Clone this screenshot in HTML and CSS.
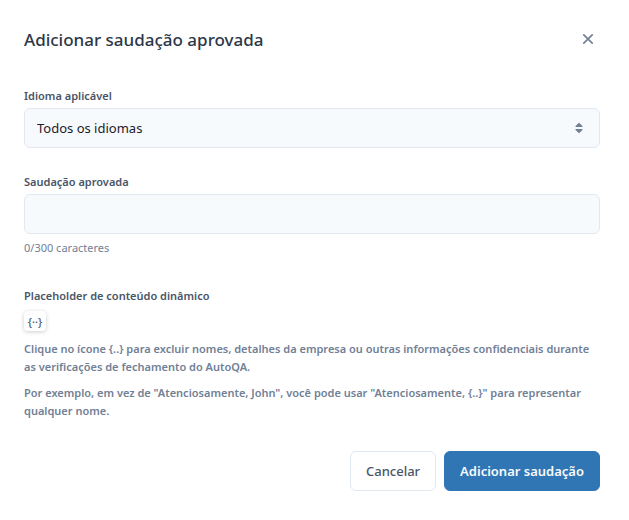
FILE: index.html
```html
<!DOCTYPE html>
<html lang="pt-BR">

<head>
  <meta charset="UTF-8" />
  <meta name="viewport" content="width=device-width, initial-scale=1.0" />
  <title>Adicionar saudação aprovada</title>
  <link rel="stylesheet" href="styles.css">
</head>

<body>
  <form class="modal">
    <header class="modal-header">
      <h1>Adicionar saudação aprovada</h1>
      <button type="button" class="close-btn" aria-label="Fechar">
        <svg width="12" height="12" viewBox="0 0 12 12" fill="none" stroke="currentColor" stroke-width="1.7" stroke-linecap="round">
          <path d="M1.8 1.8l8.4 8.4M10.2 1.8l-8.4 8.4" />
        </svg>
      </button>
    </header>

    <div class="field">
      <label for="language">Idioma aplicável</label>
      <div class="select-wrap">
        <select id="language" class="control">
          <option>Todos os idiomas</option>
        </select>
        <svg class="select-icon" width="8" height="12" viewBox="0 0 8 12" fill="currentColor">
          <path d="M4 .8L7.5 4Q7.9 5 7 5H1Q.1 5 .5 4ZM4 11.2L.5 8Q.1 7 1 7H7Q7.9 7 7.5 8Z" />
        </svg>
      </div>
    </div>

    <div class="field">
      <label for="greeting">Saudação aprovada</label>
      <input type="text" id="greeting" class="control" maxlength="300" />
      <div class="counter">0/300 caracteres</div>
    </div>

    <section class="placeholder">
      <h2>Placeholder de conteúdo dinâmico</h2>
      <button type="button" class="token-btn">{··}</button>
      <p>Clique no ícone {..} para excluir nomes, detalhes da empresa ou outras informações confidenciais durante as verificações de fechamento do AutoQA.</p>
      <p>Por exemplo, em vez de "Atenciosamente, John", você pode usar "Atenciosamente, {..}" para representar qualquer nome.</p>
    </section>

    <footer class="modal-footer">
      <button type="button" class="btn">Cancelar</button>
      <button type="submit" class="btn btn-primary">Adicionar saudação</button>
    </footer>
  </form>
</body>

</html>
```

FILE: styles.css
```css
* {
  box-sizing: border-box;
}

body {
  margin: 0;
  font-family: "Noto Sans", "Open Sans", sans-serif;
  font-size: 11px;
  line-height: 18px;
  color: #4a5568;
  background-color: #ffffff;
}

button,
input,
select {
  font-family: inherit;
}

.modal {
  padding: 24px 29px 29px 24px;
}

.modal-header {
  display: flex;
  align-items: center;
  justify-content: space-between;
  height: 32px;
  margin-bottom: 32px;
}

h1 {
  margin: 0;
  font-size: 17px;
  font-weight: 500;
  line-height: 24px;
  color: #2d3748;
}

.close-btn {
  display: flex;
  align-items: center;
  justify-content: center;
  width: 24px;
  height: 32px;
  padding: 0 0 2px;
  border: none;
  background: none;
  color: #718096;
  cursor: pointer;
}

.field {
  margin-bottom: 26px;
}

.field label {
  display: block;
  height: 20px;
  font-weight: 600;
  line-height: 16px;
}

.control {
  display: block;
  width: 100%;
  height: 40px;
  padding: 0 12px;
  border: 1px solid #e2e8f0;
  border-radius: 6px;
  background-color: #f7fafc;
  font-size: 13px;
  color: #1a202c;
  appearance: none;
}

.select-wrap {
  position: relative;
}

.select-icon {
  position: absolute;
  top: 14px;
  right: 17px;
  color: #718096;
  pointer-events: none;
}

.counter {
  margin-top: 5px;
  color: #718096;
}

.placeholder {
  padding-top: 4px;
}

h2 {
  margin: 0 0 6px;
  font-size: 11px;
  font-weight: 600;
}

.token-btn {
  display: flex;
  align-items: center;
  justify-content: center;
  width: 22px;
  height: 20px;
  margin-bottom: 9px;
  padding: 0;
  border: none;
  border-radius: 4px;
  background-color: #ffffff;
  box-shadow: 0 1px 4px rgba(0, 0, 0, 0.2);
  font-size: 11px;
  font-weight: 500;
  color: #4a5568;
  cursor: pointer;
}

.placeholder p {
  margin: 0 0 8px;
  font-weight: 600;
  color: #718096;
}

.modal-footer {
  display: flex;
  justify-content: flex-end;
  gap: 8px;
  margin-top: 31px;
}

.btn {
  height: 40px;
  padding: 0 15px;
  border: 1px solid #e2e8f0;
  border-radius: 6px;
  background-color: #ffffff;
  font-size: 13px;
  font-weight: 500;
  color: #4a5568;
  cursor: pointer;
}

.btn-primary {
  border-color: #3076b5;
  background-color: #3076b5;
  font-weight: 600;
  color: #f7fafc;
}
```
